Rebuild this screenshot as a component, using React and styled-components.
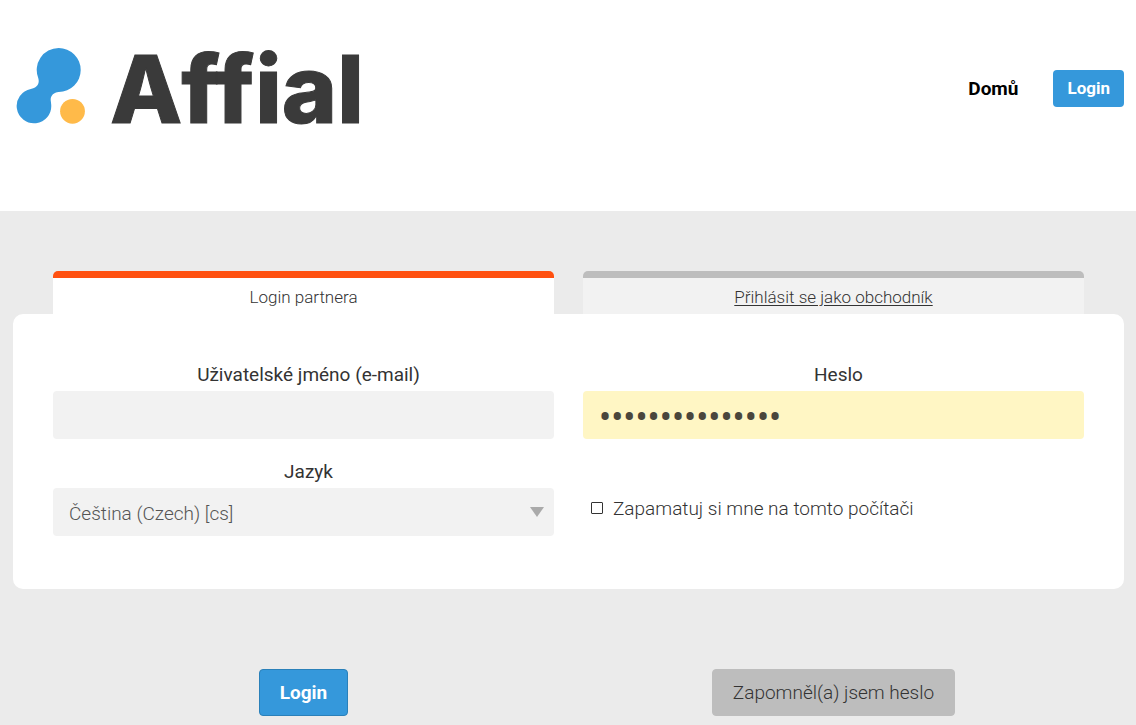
import React, { useState } from 'react';
import styled, { createGlobalStyle } from 'styled-components';

const App = () => {
  const [email, setEmail] = useState('');
  const [password, setPassword] = useState('heslopartnera1x');
  const [language, setLanguage] = useState('cs');
  const [remember, setRemember] = useState(false);

  const handleSubmit = (e) => {
    e.preventDefault();
  };

  return (
    <>
      <GlobalStyle />
      <Header>
        <Logo href="/">
          <LogoMark viewBox="0 0 70 78" aria-hidden="true">
            <path
              fill="#3598db"
              d="M42.7 1 A22 22 0 0 1 42.7 45 C37.5 45.3 34 49 34.8 54 L35.2 57.5 A17.3 17.3 0 1 1 14.8 42 C20.5 41.2 24 37 22.3 31.2 A22 22 0 0 1 42.7 1 Z"
            />
            <circle cx="56.5" cy="64.3" r="12.4" fill="#ffba49" />
          </LogoMark>
          <Wordmark>Affial</Wordmark>
        </Logo>
        <Nav>
          <NavLink href="/">Domů</NavLink>
          <NavButton type="button">Login</NavButton>
        </Nav>
      </Header>

      <Main>
        <Tabs>
          <Tab $active>Login partnera</Tab>
          <Tab>
            <a href="#merchant">Přihlásit se jako obchodník</a>
          </Tab>
        </Tabs>

        <form onSubmit={handleSubmit}>
          <Panel>
            <Field>
              <Label htmlFor="email">Uživatelské jméno (e-mail)</Label>
              <Input
                id="email"
                type="text"
                value={email}
                onChange={(e) => setEmail(e.target.value)}
              />
            </Field>
            <Field>
              <Label htmlFor="password">Heslo</Label>
              <PasswordInput
                id="password"
                type="password"
                value={password}
                onChange={(e) => setPassword(e.target.value)}
              />
            </Field>
            <Field>
              <Label htmlFor="language">Jazyk</Label>
              <SelectWrapper>
                <Select
                  id="language"
                  value={language}
                  onChange={(e) => setLanguage(e.target.value)}
                >
                  <option value="cs">Čeština (Czech) [cs]</option>
                </Select>
              </SelectWrapper>
            </Field>
            <Remember>
              <Checkbox
                type="checkbox"
                checked={remember}
                onChange={(e) => setRemember(e.target.checked)}
              />
              Zapamatuj si mne na tomto počítači
            </Remember>
          </Panel>

          <Actions>
            <Button type="submit" $primary>Login</Button>
            <Button type="button">Zapomněl(a) jsem heslo</Button>
          </Actions>
        </form>
      </Main>
    </>
  );
};

// Styled components
const GlobalStyle = createGlobalStyle`
  * {
    box-sizing: border-box;
  }

  body {
    margin: 0;
    background-color: #ebebeb;
    color: #333;
    font-family: Roboto, "Open Sans", sans-serif;
    font-size: 19px;
    font-weight: 300;
  }
`;

const Header = styled.header`
  display: flex;
  align-items: center;
  justify-content: space-between;
  padding: 47px 12px 82px 16px;
  background-color: #fff;
`;

const Logo = styled.a`
  display: flex;
  gap: 24px;
  height: 82px;
  color: #3a3a3a;
  text-decoration: none;
`;

const LogoMark = styled.svg`
  width: 70px;
  height: 78px;
`;

const Wordmark = styled.span`
  font-family: Inter, sans-serif;
  font-size: 94px;
  font-weight: 800;
  line-height: 84px;
  -webkit-text-stroke: 1px #3a3a3a;
`;

const Nav = styled.nav`
  display: flex;
  align-items: center;
  gap: 35px;
`;

const NavLink = styled.a`
  color: #000;
  font-size: 19px;
  font-weight: 700;
  text-decoration: none;
`;

const NavButton = styled.button`
  height: 37px;
  padding: 0 14px;
  border: none;
  border-radius: 4px;
  background-color: #3598db;
  color: #fff;
  font-family: inherit;
  font-size: 17px;
  font-weight: 700;
  cursor: pointer;
`;

const Main = styled.main`
  padding: 60px 12px 9px 13px;
`;

const Tabs = styled.div`
  display: grid;
  grid-template-columns: 1fr 1fr;
  gap: 29px;
  padding: 0 40px;
`;

const Tab = styled.div`
  height: 43px;
  border-top: 7px solid ${({ $active }) => ($active ? '#ff5010' : '#bdbdbd')};
  border-radius: 5px 5px 0 0;
  background-color: ${({ $active }) => ($active ? '#fff' : '#f2f2f2')};
  font-size: 17px;
  line-height: 38px;
  text-align: center;

  a {
    color: inherit;
    text-underline-offset: 2px;
  }
`;

const Panel = styled.div`
  display: grid;
  grid-template-columns: 1fr 1fr;
  gap: 17px 29px;
  padding: 45px 40px 53px;
  border-radius: 10px;
  background-color: #fff;
`;

const Field = styled.div`
  display: flex;
  flex-direction: column;
`;

const Label = styled.label`
  padding-left: 10px;
  font-size: 19px;
  font-weight: 400;
  line-height: 32px;
  text-align: center;
`;

const Input = styled.input`
  width: 100%;
  height: 48px;
  padding: 0 16px;
  border: none;
  border-radius: 4px;
  background-color: #f2f2f2;
  color: #4a463c;
  font-family: inherit;
  font-size: 19px;
`;

// The masking dots follow the font size, so they get a larger one
const PasswordInput = styled(Input)`
  padding-top: 6px;
  background-color: #fff6c4;
  font-size: 36px;
`;

const SelectWrapper = styled.div`
  position: relative;

  &::after {
    content: '';
    position: absolute;
    top: 19px;
    right: 10px;
    border: 7px solid transparent;
    border-top: 10px solid #aaa;
    border-bottom: none;
    pointer-events: none;
  }
`;

const Select = styled.select`
  appearance: none;
  width: 100%;
  height: 48px;
  padding: 2px 40px 0 16px;
  border: none;
  border-radius: 4px;
  background-color: #f2f2f2;
  color: #555;
  font-family: inherit;
  font-size: 19px;
  font-weight: 300;
`;

const Remember = styled.label`
  display: flex;
  align-items: center;
  gap: 10px;
  padding: 24px 8px 0;
`;

const Checkbox = styled.input`
  appearance: none;
  width: 12px;
  height: 12px;
  margin: 0;
  border: 1px solid #333;
  border-radius: 1px;
  background-color: #fff;

  &:checked {
    background-color: #3598db;
  }
`;

const Actions = styled.div`
  display: grid;
  grid-template-columns: 1fr 1fr;
  gap: 29px;
  justify-items: center;
  padding: 80px 40px 0;
`;

const Button = styled.button`
  height: 47px;
  padding: 0 20px;
  border: 1px solid ${({ $primary }) => ($primary ? '#2a80b9' : '#bdbdbd')};
  border-radius: 4px;
  background-color: ${({ $primary }) => ($primary ? '#3598db' : '#bdbdbd')};
  color: ${({ $primary }) => ($primary ? '#fff' : '#333')};
  font-family: inherit;
  font-size: 19px;
  font-weight: ${({ $primary }) => ($primary ? 700 : 300)};
  cursor: pointer;
`;

export default App;
